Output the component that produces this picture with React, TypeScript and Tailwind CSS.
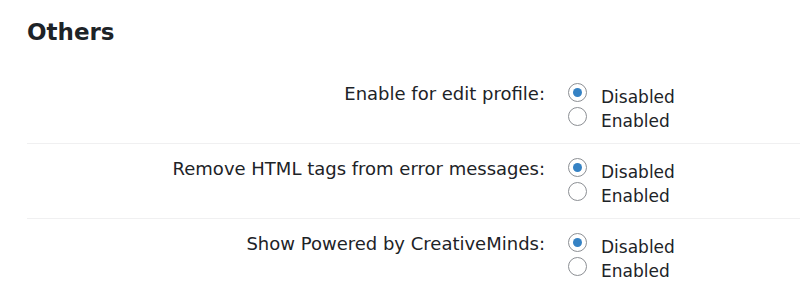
import React from "react";

const rows = [
  "Enable for edit profile:",
  "Remove HTML tags from error messages:",
  "Show Powered by CreativeMinds:",
];

function Radio({ checked }: { checked: boolean }) {
  return (
    <span className="flex h-[19px] w-[19px] shrink-0 items-center justify-center rounded-full border border-[#8c8f94] bg-white">
      {checked && <span className="h-[9px] w-[9px] rounded-full bg-[#3582c4]" />}
    </span>
  );
}

export default function App() {
  return (
    <div
      className="h-[300px] w-[800px] overflow-hidden bg-white pl-[27px] text-[#1d2327]"
      style={{ fontFamily: '"DejaVu Sans", Verdana, sans-serif' }}
    >
      <h2 className="pt-[18px] text-[23px] font-bold leading-[28px]">Others</h2>
      <div className="mt-[23px]">
        {rows.map((label, i) => (
          <div
            key={label}
            className={`flex h-[75px] items-start ${i < rows.length - 1 ? "border-b border-[#f0f0f1]" : ""}`}
          >
            <div className="w-[518px] pt-[13px] text-right text-[18px] leading-[24px]">{label}</div>
            <div className="flex flex-col pl-[23px] pt-[14px] text-[17px] leading-[24px]">
              <label className="flex h-[24px] items-start">
                <Radio checked />
                <span className="ml-[14px] pt-[2px]">Disabled</span>
              </label>
              <label className="flex h-[24px] items-start">
                <Radio checked={false} />
                <span className="ml-[14px] pt-[2px]">Enabled</span>
              </label>
            </div>
          </div>
        ))}
      </div>
    </div>
  );
}
